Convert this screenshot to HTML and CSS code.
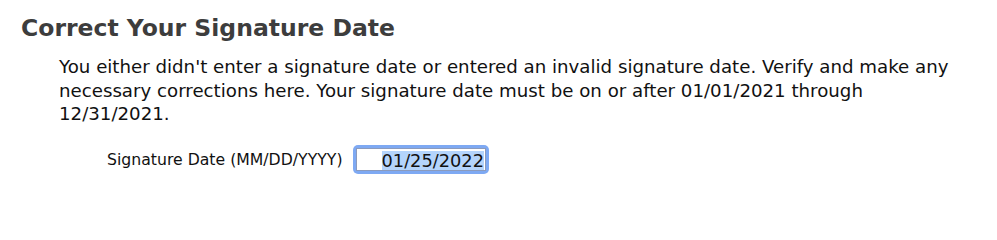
FILE: index.html
```html
<!DOCTYPE html>
<html lang="en">
<head>
<meta charset="utf-8">
<title>Correct Your Signature Date</title>
<link rel="stylesheet" href="styles.css">
</head>
<body>
<main class="page">
  <h1 class="title">Correct Your Signature Date</h1>
  <p class="message">You either didn't enter a signature date or entered an invalid signature date. Verify and make any necessary corrections here. Your signature date must be on or after 01/01/2021 through 12/31/2021.</p>
  <div class="field-row">
    <label class="field-label" for="sigdate">Signature Date (MM/DD/YYYY)</label>
    <div class="field-ring">
      <div class="field-box" id="sigdate" role="textbox"><span class="selected">01/25/2022</span></div>
    </div>
  </div>
</main>
</body>
</html>
```
FILE: styles.css
```css
html, body {
  margin: 0;
  padding: 0;
  background: #ffffff;
}
body {
  font-family: "DejaVu Sans", "Liberation Sans", sans-serif;
  color: #111111;
}
.page {
  padding: 13px 0 0 21px;
}
.title {
  margin: 0;
  font-size: 23.5px;
  font-weight: bold;
  color: #3d3d3d;
  line-height: 30px;
}
.message {
  margin: 12px 0 0 38px;
  width: 905px;
  font-size: 18.2px;
  line-height: 23.5px;
}
.field-row {
  display: flex;
  align-items: center;
  margin: 19px 0 0 86px;
}
.field-label {
  font-size: 15.7px;
  width: 246px;
}
.field-ring {
  padding: 3px;
  border-radius: 5px;
  background: #7ea9f3;
}
.field-box {
  width: 127px;
  height: 19px;
  padding: 2px 1px 0 0;
  border: 1px solid #8b9bbd;
  background: #ffffff;
  text-align: right;
  font-size: 17.8px;
  line-height: 19px;
  box-sizing: content-box;
}
.selected {
  display: inline-block;
  vertical-align: top;
  line-height: 19px;
  background: #b4d4fc;
  color: #111111;
}
```
